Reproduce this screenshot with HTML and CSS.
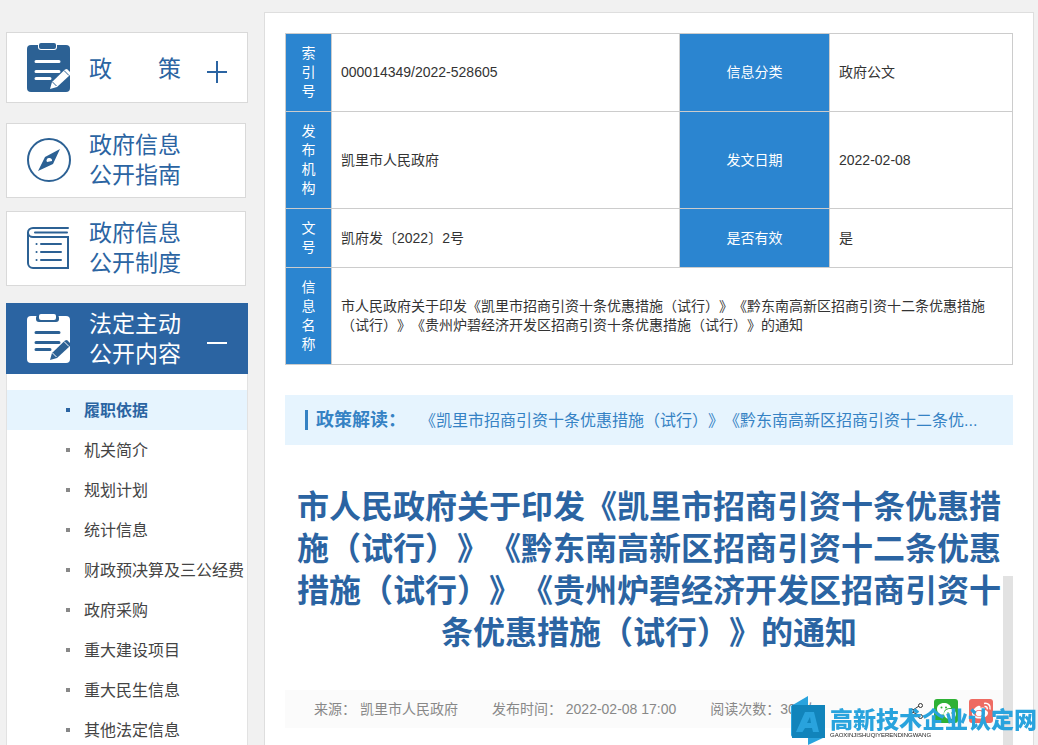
FILE: index.html
```html
<!DOCTYPE html>
<html lang="zh-CN">
<head>
<meta charset="utf-8">
<meta name="viewport" content="width=device-width, initial-scale=1">
<title>政府信息公开</title>
<link rel="stylesheet" href="styles.css">
</head>
<body>
<div class="page">
  <aside class="sidebar">
    <button class="card card-row policy" type="button">
      <svg class="icon clip" viewBox="0 0 44 50" aria-hidden="true">
        <rect class="body" y="2" width="43" height="47" rx="4"/>
        <rect class="hole" x="11" y="-2" width="19" height="9" rx="3"/>
        <rect class="body" x="12" y="0" width="17" height="6" rx="2"/>
        <path class="lines" d="M9 18.500h23M9 28.500h23M9 35.500h14"/>
        <path class="hole" d="M25 39 38 26.500l2-.5 3 3v3L30 44l-7 2z"/>
        <path class="detail" d="m37 27.500 5 5M25.500 39l4 4"/>
      </svg>
      <span class="label">政　　策</span>
      <svg class="toggle" viewBox="0 0 22 22" aria-hidden="true"><path d="M1 11h20M11 0v22"/></svg>
    </button>
    <a class="card guide" href="#">
      <svg class="icon" viewBox="0 0 44 44" aria-hidden="true">
        <circle class="stroke" cx="22" cy="22" r="21"/>
        <path class="solid" fill-rule="evenodd" d="M33 11 26 26 11 33 18 19zM22 20a2.500 2.500 0 0 0-2 4l5-1a2.500 2.500 0 0 0-3-3z"/>
      </svg>
      <span class="label">政府信息<br>公开指南</span>
    </a>
    <a class="card system" href="#">
      <svg class="icon" viewBox="0 0 44 44" aria-hidden="true">
        <path class="stroke" d="M41 2H6a5 4.500 0 0 0 0 9h35v31H6a5 5 0 0 1-5-5V6"/>
        <path class="stroke" d="M8 6.500h32M14 18h20M14 26h20M14 34h20"/>
        <path class="stroke" d="M9.500 18h.1M9.500 26h.1M9.500 34h.1"/>
      </svg>
      <span class="label">政府信息<br>公开制度</span>
    </a>
    <button class="card card-row active" type="button" aria-expanded="true">
      <svg class="icon clip" viewBox="0 0 44 50" aria-hidden="true">
        <rect class="body" y="2" width="43" height="47" rx="4"/>
        <rect class="hole" x="9" y="1" width="23" height="7" rx="3"/>
        <rect class="body" x="12" y="0" width="17" height="6" rx="2"/>
        <path class="lines" d="M9 18.500h23M9 28.500h23M9 35.500h14"/>
        <path class="hole" d="M25 39 38 26.500l2-.5 3 3v3L30 44l-7 2z"/>
        <path class="detail" d="m37 27.500 5 5M25.500 39l4 4"/>
      </svg>
      <span class="label">法定主动<br>公开内容</span>
      <svg class="toggle" viewBox="0 0 22 22" aria-hidden="true"><path d="M1 11h20"/></svg>
    </button>
    <nav class="menu" aria-label="法定主动公开内容">
      <a class="current" href="#">履职依据</a>
      <a href="#">机关简介</a>
      <a href="#">规划计划</a>
      <a href="#">统计信息</a>
      <a href="#">财政预决算及三公经费</a>
      <a href="#">政府采购</a>
      <a href="#">重大建设项目</a>
      <a href="#">重大民生信息</a>
      <a href="#">其他法定信息</a>
    </nav>
  </aside>
  <main class="content">
    <table class="info">
      <colgroup><col class="c-key"><col><col class="c-label"><col class="c-value"></colgroup>
      <tr><th scope="row">索引号</th><td>000014349/2022-528605</td><th scope="row">信息分类</th><td>政府公文</td></tr>
      <tr><th scope="row">发布机构</th><td>凯里市人民政府</td><th scope="row">发文日期</th><td>2022-02-08</td></tr>
      <tr><th scope="row">文号</th><td>凯府发〔2022〕2号</td><th scope="row">是否有效</th><td>是</td></tr>
      <tr><th scope="row">信息名称</th><td colspan="3">市人民政府关于印发《凯里市招商引资十条优惠措施（试行）》《黔东南高新区招商引资十二条优惠措施（试行）》《贵州炉碧经济开发区招商引资十条优惠措施（试行）》的通知</td></tr>
    </table>
    <div class="reading">
      <strong>政策解读：</strong>
      <a href="#">《凯里市招商引资十条优惠措施（试行）》《黔东南高新区招商引资十二条优...</a>
    </div>
    <h1>市人民政府关于印发《凯里市招商引资十条优惠措施（试行）》《黔东南高新区招商引资十二条优惠措施（试行）》《贵州炉碧经济开发区招商引资十条优惠措施（试行）》的通知</h1>
    <div class="meta">
      <span>来源： 凯里市人民政府</span>
      <span>发布时间： 2022-02-08 17:00</span>
      <span>阅读次数：302次</span>
      <div class="share">
        <button class="share-btn more" type="button" aria-label="分享">
          <svg viewBox="0 0 14 24"><path d="m4 11 6-4M4 13l6 4"/><circle cx="2.500" cy="12" r="2"/><circle cx="11.500" cy="6.500" r="2"/><circle cx="11.500" cy="17.500" r="2"/></svg>
        </button>
        <button class="share-btn wechat" type="button" aria-label="微信">
          <svg viewBox="0 0 24 24"><path d="M10 4c-4 0-7 2.500-7 6 0 2 1 3.500 2.500 4.500L5 17l3-1.500h2C9 12 12 8.500 17 9c-.5-3-3.500-5-7-5z"/><path d="M16 10c-3.500 0-6 2.200-6 5s2.500 5 6 5l2-.3 2.500 1.300-.5-2c1.200-1 2-2.200 2-4 0-2.800-2.600-5-6-5z"/><g class="eyes"><circle cx="7.500" cy="8.500" r="1"/><circle cx="12" cy="8.500" r="1"/><circle cx="14" cy="14" r=".8"/><circle cx="18" cy="14" r=".8"/></g></svg>
        </button>
        <button class="share-btn weibo" type="button" aria-label="微博">
          <svg viewBox="0 0 24 24"><path fill-rule="evenodd" d="M9 7c2-.8 3 .2 2.500 2 3-1 5-.5 4.500 2 2 .5 3 1.500 3 3 0 3-4 5.500-8.500 5.500S3 17.500 3 14.500C3 12 6 8 9 7zm1.500 4C7 11 5 13 5 14.500c0 2 2 3.200 5 3.200 3.500 0 6-1.700 6-3.500S14 11 10.500 11z"/><ellipse cx="10" cy="14.500" rx="3.200" ry="2.700"/><path class="wave" d="M15 4.500c4-1 7 2 6 6M15.500 7.500c2-.3 3 1 2.700 2.800"/></svg>
        </button>
      </div>
    </div>
  </main>
</div>
<div class="scroll-thumb"></div>
<div class="watermark">
  <svg viewBox="0 0 36 50" aria-hidden="true">
    <path class="back" d="M1 11 18 1v12L1 42z"/>
    <path class="back" d="M18 40h17v2l-17 8z"/>
    <path class="front" d="M2 10h33v33H2z"/>
    <path class="letter" fill-rule="evenodd" d="M6 37 15 17h9l5 20h-6l-1-4h-7l-2.500 4zm11-9h4l-1-6z"/>
  </svg>
  <div class="mark-text"><span class="mark-cn">高新技术企业认定网</span><span class="mark-en">GAOXINJISHUQIYERENDINGWANG</span></div>
</div>
</body>
</html>
```

FILE: styles.css
```css
* { box-sizing: border-box; }
body {
  margin: 0;
  height: 100vh;
  overflow: hidden;
  background: #f1f1f1;
  color: #333;
  font-family: "Liberation Sans", "Noto Sans CJK SC", sans-serif;
  font-size: 14px;
  line-height: 19px;
  text-spacing-trim: space-all;
}
a { text-decoration: none; color: inherit; }
button { font: inherit; cursor: pointer; }

.page {
  display: flex;
  align-items: stretch;
  gap: 16px;
  min-height: 100vh;
  padding: 12px 4px 0 6px;
}

/* Sidebar */
.sidebar {
  flex: 0 0 242px;
  display: flex;
  flex-direction: column;
  padding-top: 20px;
}
.card {
  display: flex;
  align-items: center;
  gap: 18px;
  height: 75px;
  padding: 0 19px 2px 20px;
  margin-right: 2px;
  margin-bottom: 13px;
  background: #fff;
  border: 1px solid #d9d9d9;
  color: #2b64a2;
  text-align: left;
}
.card .label { flex: 1; font-size: 23px; line-height: 30px; white-space: nowrap; }
.card-row { height: 71px; margin-right: 0; padding-bottom: 0; }
.policy { margin-bottom: 20px; }
.policy .label { padding-top: 3px; }
.system { margin-bottom: 17px; }
.active { background: #2b64a2; border-color: #2b64a2; color: #fff; margin-bottom: 0; }
.icon { flex: none; width: 44px; height: 44px; color: #2c6194; }
.icon.clip { height: 50px; }
.stroke { fill: none; stroke: currentColor; stroke-width: 2; stroke-linecap: round; }
.solid, .body { fill: currentColor; }
.hole { fill: #fff; }
.lines { fill: none; stroke: #fff; stroke-width: 3; stroke-linecap: round; }
.detail { fill: none; stroke: #2c6194; stroke-width: 1; }
.active .icon { color: #fff; }
.active .hole { fill: #2c6194; }
.active .lines { stroke: #2c6194; }
.active .detail { stroke: #fff; }
.toggle { flex: none; width: 22px; height: 22px; margin-top: 8px; }
.toggle path { fill: none; stroke: currentColor; stroke-width: 2; }

.menu {
  flex: 1 0 auto;
  padding: 16px 0;
  background: #fff;
  border: solid #e2e2e2;
  border-width: 0 1px;
}
.menu a {
  display: flex;
  align-items: center;
  gap: 14px;
  height: 40px;
  padding-left: 59px;
  font-size: 16px;
  white-space: nowrap;
  color: #444;
}
.menu a::before { content: ""; width: 4px; height: 4px; background: #888; }
.menu .current { background: #e6f4fe; color: #2b64a2; font-weight: bold; }
.menu .current::before { background: #2b64a2; }

/* Document */
.content {
  flex: 1;
  min-width: 0;
  padding: 20px;
  background: #fff;
  border: 1px solid #dedede;
}
.info { width: 100%; border-collapse: collapse; table-layout: fixed; }
.c-key { width: 46px; }
.c-label { width: 150px; }
.c-value { width: 183px; }
.info th, .info td { padding: 10px 9px; border: 1px solid #ccc; vertical-align: middle; }
.info th { background: #2b85d0; color: #fff; font-weight: normal; text-align: center; }
.info th:first-child { padding: 10px 15px; }
.info td { text-align: left; }

.reading {
  display: flex;
  align-items: center;
  height: 50px;
  margin-top: 30px;
  padding: 0 20px;
  background: #e6f4fe;
  color: #3582c4;
  white-space: nowrap;
}
.reading strong {
  padding-left: 8px;
  margin-right: 14px;
  border-left: 3px solid #3582c4;
  font-size: 18px;
  line-height: 20px;
}
.reading a { font-size: 16px; }
h1 {
  margin: 41px 0 36px;
  color: #2b64a2;
  font-size: 32px;
  line-height: 42px;
  text-align: center;
}
.meta {
  display: flex;
  align-items: center;
  gap: 34px;
  height: 38px;
  padding: 0 20px 0 29px;
  background: #fbfbfb;
  color: #888;
  white-space: nowrap;
}
.share { display: flex; gap: 11px; margin-left: auto; padding-top: 4px; }
.share-btn { width: 24px; height: 24px; padding: 0; border: 0; border-radius: 3px; background: none; }
.share-btn svg { display: block; width: 24px; height: 24px; fill: #fff; }
.share-btn.more { width: 14px; }
.share-btn.more svg { width: 14px; fill: none; stroke: #333; }
.share-btn.wechat { background: #2eb135; }
.eyes { fill: #2eb135; }
.share-btn.weibo { background: #ee6b62; }
.wave { fill: none; stroke: #fff; stroke-width: 1.5; }

/* Layers over the page */
.scroll-thumb {
  position: fixed;
  right: 25px;
  bottom: 0;
  width: 10px;
  height: 169px;
  background: #e2e2e2;
}
.watermark {
  position: fixed;
  right: 1px;
  bottom: 0;
  display: flex;
  align-items: flex-start;
  gap: 4px;
}
.watermark svg { width: 36px; height: 50px; }
.back { fill: #29a3dd; }
.front { fill: #1184bb; }
.letter { fill: #29a3dd; }
.mark-text { display: flex; flex-direction: column; padding-top: 14px; }
.mark-cn { color: #29a3dd; font-size: 23px; line-height: 23px; font-weight: 900; }
.mark-en { color: #222; font-size: 6px; line-height: 7px; }
```
